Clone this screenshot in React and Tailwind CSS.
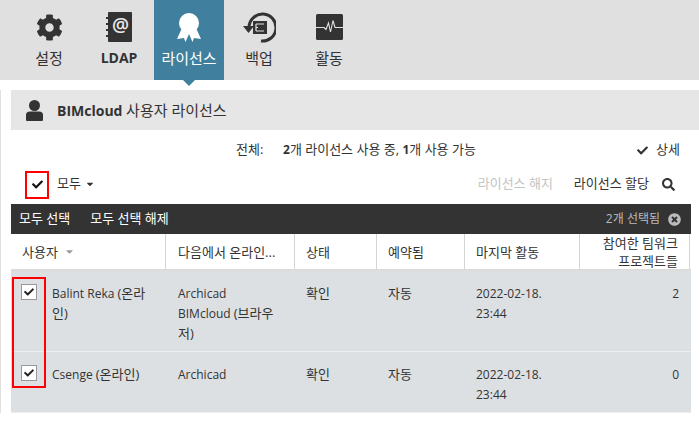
import React from 'react';
import { FaCog, FaCheck, FaSearch, FaTimesCircle, FaCaretDown } from 'react-icons/fa';

const FONT = "font-['Open_Sans','Noto_Sans_CJK_KR',sans-serif]";

// korean runs render a touch larger than the latin text next to them
function K({ children }) {
  return <span className="text-[13px] leading-none">{children}</span>;
}

function LdapIcon() {
  return (
    <svg width="26" height="32" viewBox="0 0 26 32">
      <rect x="2" y="1" width="24" height="30" rx="1" fill="#333" />
      <rect x="0" y="6" width="3" height="2" fill="#333" />
      <rect x="0" y="12" width="3" height="2" fill="#333" />
      <rect x="0" y="18" width="3" height="2" fill="#333" />
      <rect x="0" y="24" width="3" height="2" fill="#333" />
      <text x="14.5" y="21" textAnchor="middle" fontSize="19" fontWeight="600" fill="#e8e8e8" fontFamily="Open Sans">@</text>
    </svg>
  );
}

function RibbonIcon() {
  return (
    <svg width="26" height="30" viewBox="0 0 26 30" fill="#fff" className="mt-[2px]">
      <circle cx="13" cy="10" r="10" />
      <path d="M6 15 L1 26 L8 25 L9.5 29 L13 21 L16.5 29 L18 25 L25 26 L20 15 Z" />
    </svg>
  );
}

function BackupIcon() {
  return (
    <svg width="33" height="31" viewBox="0 0 33 31">
      <path d="M6 15 A13.5 13.5 0 1 1 18 29" fill="none" stroke="#333" strokeWidth="3" />
      <path d="M0 14 L11 14 L5.5 21 Z" fill="#333" />
      <rect x="10" y="9" width="14" height="13" fill="#333" />
      <path d="M13 12 H21 M13 15.5 H15 M13 19 H21 M13 12 V19" stroke="#e0e0e0" strokeWidth="1.2" fill="none" />
    </svg>
  );
}

function ActivityIcon() {
  return (
    <svg width="27" height="26" viewBox="0 0 27 26">
      <rect x="0" y="0" width="27" height="26" rx="1.5" fill="#333" />
      <path d="M0 13.5 H8 L10 15.5 L12.5 9 L14.5 18 L17 6.5 L19 13.5 H27" fill="none" stroke="#e0e0e0" strokeWidth="1.1" />
    </svg>
  );
}

function UserIcon() {
  return (
    <svg width="17" height="21" viewBox="0 0 17 21" fill="#333" className="mr-[14px]">
      <ellipse cx="8.5" cy="5.5" rx="5.5" ry="5.5" />
      <path d="M0 15 Q0 11.5 4 11.5 H13 Q17 11.5 17 15 V20 Q17 21 16 21 H1 Q0 21 0 20 Z" />
    </svg>
  );
}

function NavItem({ icon, label, active, bold }) {
  return (
    <div className={`relative w-[70px] h-20 flex flex-col items-center ${active ? 'bg-[#40809e] text-white' : 'text-[#333]'}`}>
      <div className="h-10 mt-[7px] flex items-center justify-center">{icon}</div>
      <div className={`mt-[1px] leading-5 ${bold ? 'font-bold text-[14px]' : 'text-[15px]'}`}>{label}</div>
      {active && (
        <div className="absolute left-[29px] top-20 w-0 h-0 border-x-[6px] border-x-transparent border-t-[6px] border-t-[#40809e]" />
      )}
    </div>
  );
}

function Checkbox() {
  return (
    <div className="w-4 h-4 bg-white border border-[#999] flex items-center justify-center">
      <FaCheck className="text-[#222] text-[10px]" />
    </div>
  );
}

const COLS = 'grid grid-cols-[155px_129px_82px_88px_115px_110px]';

function HeaderCell({ children, className = '' }) {
  return (
    <div className={`flex items-center border-r border-[#d4d4d4] px-[11px] h-[35px] text-[13px] leading-[18px] text-[#333] ${className}`}>
      {children}
    </div>
  );
}

function Row({ user, online, extra }) {
  return (
    <div className={`${COLS} pt-[13px] pb-[7px] border-b border-[#eceef0] bg-[#dce0e3] text-[12px] leading-5 text-[#333]`}>
      <div className="flex">
        <div className="w-[41px] pl-[10px] shrink-0"><Checkbox /></div>
        <div className="pr-3">{user}</div>
      </div>
      <div className="pl-3 pr-3">
        {online.map((o, i) => <div key={i}>{o}</div>)}
      </div>
      <div className="pl-[11px]"><K>확인</K></div>
      <div className="pl-[11px]"><K>자동</K></div>
      <div className="pl-[11px] pr-[30px]">2022-02-18. 23:44</div>
      <div className="text-right pr-[11px]">{extra}</div>
    </div>
  );
}

export default function App() {
  return (
    <div className={`${FONT} relative w-[699px] h-[423px] overflow-hidden bg-white`}>
      <nav className="h-20 bg-[#e0e0e0] flex pl-[14px]">
        <NavItem icon={<FaCog className="text-[27px] text-[#333]" />} label="설정" />
        <NavItem icon={<LdapIcon />} label="LDAP" bold />
        <NavItem icon={<RibbonIcon />} label="라이선스" active />
        <NavItem icon={<BackupIcon />} label="백업" />
        <NavItem icon={<ActivityIcon />} label="활동" />
      </nav>

      <div className="pl-[11px] border-l border-[#e0e0e0]">
        <div className="mt-[10px] -ml-px h-10 bg-[#e6e6e6] flex items-center pl-[15px] text-[14px] text-[#333]">
          <UserIcon />
          <span><span className="font-bold">BIMcloud</span> <span className="text-[15px] leading-none">사용자 라이선스</span></span>
        </div>

        <div className="h-10 -ml-px flex items-center text-[13px] text-[#333] pr-[19px]">
          <span className="ml-[225px] w-[47px]">전체:</span>
          <span><b className="text-[12px]">2</b>개 라이선스 사용 중, <b className="text-[12px]">1</b>개 사용 가능</span>
          <span className="ml-auto flex items-center">
            <FaCheck className="text-[11px] mr-2" />상세
          </span>
        </div>

        <div className="h-[34px] pb-[6px] -ml-px flex items-center text-[13px] text-[#333] pr-6">
          <div className="w-[46px] pl-[21px]">
            <FaCheck className="text-[11px] text-[#111]" />
          </div>
          <span>모두</span>
          <FaCaretDown className="text-[10px] ml-1" />
          <span className="ml-auto text-[#c4c4c4]">라이선스 해지</span>
          <span className="ml-[21px]">라이선스 할당</span>
          <FaSearch className="text-[13px] ml-[13px]" />
        </div>

        <div className="w-[680px] -ml-px h-[30px] bg-[#333] flex items-center px-2 text-[13px] text-white">
          <span>모두 선택</span>
          <span className="ml-5">모두 선택 해제</span>
          <span className="ml-auto text-[12px] text-[#bbb]">2개 선택됨</span>
          <FaTimesCircle className="text-[13px] text-[#bbb] ml-2 mr-[2px]" />
        </div>

        <div className="w-[680px] -ml-px">
          <div className={`${COLS} border-b-2 border-[#dcdcdc]`}>
            <HeaderCell>
              사용자
              <FaCaretDown className="text-[11px] text-[#999] ml-[6px]" />
            </HeaderCell>
            <HeaderCell className="pl-3">다음에서 온라인...</HeaderCell>
            <HeaderCell>상태</HeaderCell>
            <HeaderCell>예약됨</HeaderCell>
            <HeaderCell>마지막 활동</HeaderCell>
            <HeaderCell className="justify-end text-right">참여한 팀워크<br />프로젝트들</HeaderCell>
          </div>
          <Row
            user={<>Balint Reka <K>(온라</K><br /><K>인)</K></>}
            online={['Archicad', <>BIMcloud <K>(브라우</K><br /><K>저)</K></>]}
            extra="2"
          />
          <Row user={<>Csenge <K>(온라인)</K></>} online={['Archicad']} extra="0" />
        </div>
      </div>

      {/* annotation boxes */}
      <div className="absolute left-[25px] top-[171px] w-6 h-7 border-2 border-[#f00]" />
      <div className="absolute left-3 top-[277px] w-[34px] h-[111px] border-2 border-[#f00]" />
    </div>
  );
}
